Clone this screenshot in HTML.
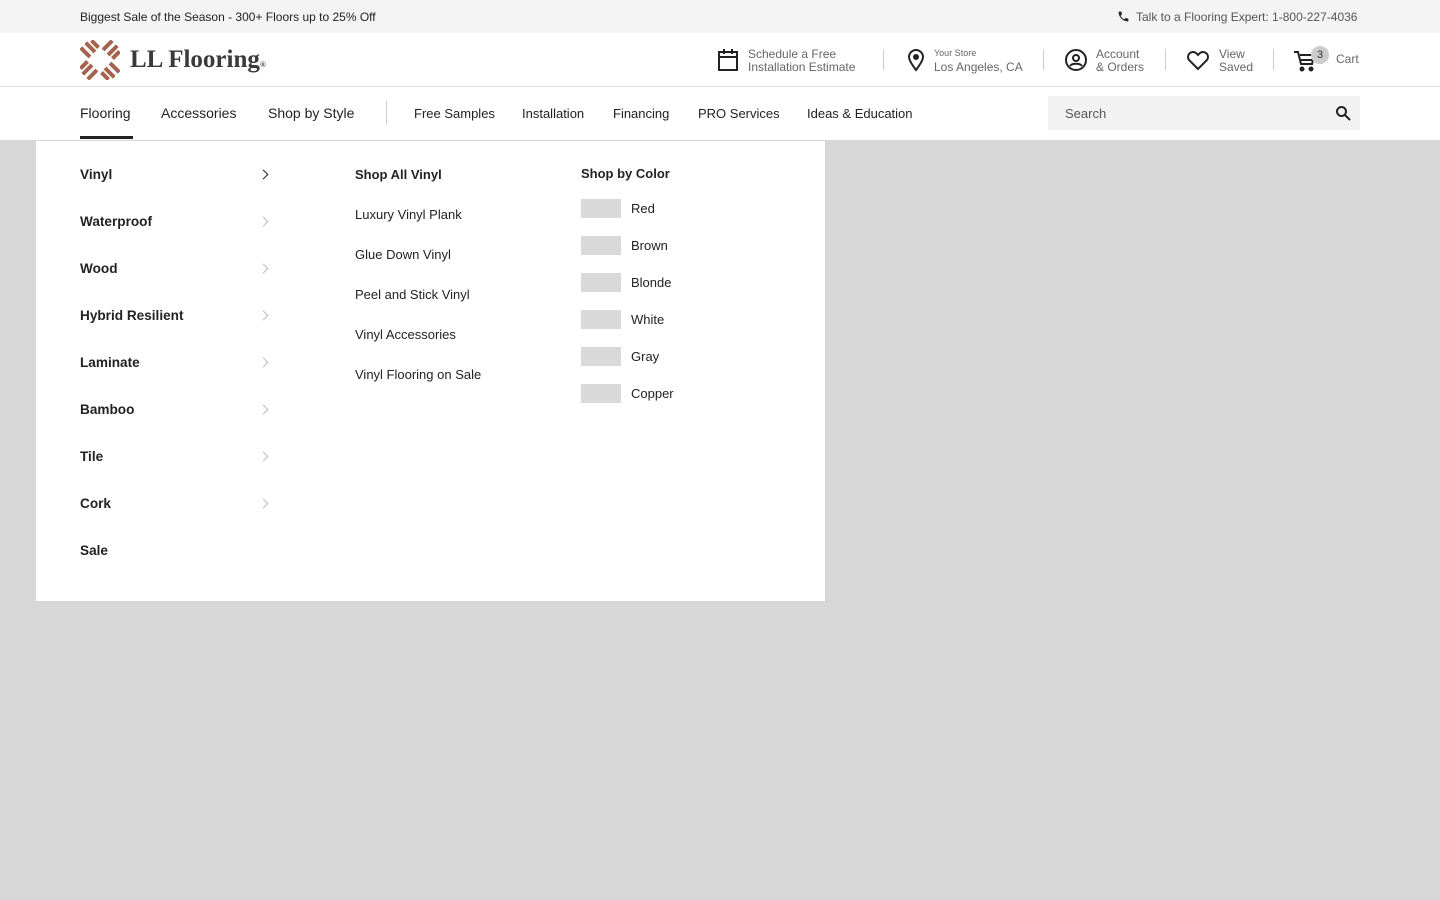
<!DOCTYPE html>
<html><head><style>
*{margin:0;padding:0;box-sizing:border-box}
body{width:1440px;height:900px;background:#d7d7d7;font-family:"Liberation Sans",sans-serif;color:#222;position:relative;overflow:hidden}
.top{position:absolute;left:0;top:0;width:1440px;height:33px;background:#f4f4f4;font-size:12px;color:#222}
.hdr{position:absolute;left:0;top:33px;width:1440px;height:54px;background:#fff;border-bottom:1px solid #e2e2e2}
.nav{position:absolute;left:0;top:87px;width:1440px;height:53px;background:#fff}
.a{position:absolute;white-space:nowrap}
.util{font-size:12px;color:#666;line-height:13px}
.sep{position:absolute;top:49px;width:1px;height:21px;background:#ccc}
.panel{position:absolute;left:36px;top:141px;width:789px;height:460px;background:#fff}
.cat{position:absolute;left:44px;font-size:13.6px;font-weight:bold;color:#222}
.chev{position:absolute;left:224px;width:7px;height:7px;border-right:1.5px solid #bbb;border-top:1.5px solid #bbb;transform:rotate(45deg)}
.sub{position:absolute;left:319px;font-size:13px;color:#222}
.sw{position:absolute;left:545px;width:40px;height:19px;background:#d9d9d9}
.cl{position:absolute;left:595px;font-size:13px;color:#222}
</style></head><body>
<div class="top">
<div class="a" style="left:80px;top:10px">Biggest Sale of the Season - 300+ Floors up to 25% Off</div>
<svg class="a" style="left:1117px;top:10px" width="13" height="13" viewBox="0 0 24 24"><path d="M6.6 10.8c1.4 2.8 3.8 5.1 6.6 6.6l2.2-2.2c.3-.3.7-.4 1-.2 1.1.4 2.300.6 3.6.6.6 0 1 .4 1 1V20c0 .6-.4 1-1 1C10.6 21 3 13.4 3 4c0-.6.4-1 1-1h3.5c.6 0 1 .4 1 1 0 1.3.2 2.5.6 3.6.1.3 0 .7-.2 1z" fill="#222"/></svg>
<div class="a" style="left:1136px;top:10px;color:#555">Talk to a Flooring Expert: 1-800-227-4036</div>
</div>
<div class="hdr"></div>
<svg class="a" style="left:80px;top:40px" width="40" height="40" viewBox="0 0 40 40" fill="#a4634f">
<g id="q"><rect x="3" y="6" width="4" height="13" transform="rotate(-45 5 12)"/><rect x="8" y="1" width="4" height="13" transform="rotate(-45 10 7)"/><rect x="13" y="-1" width="4" height="10" transform="rotate(-45 15 4)"/></g>
<use href="#q" transform="rotate(90 20 20)"/><use href="#q" transform="rotate(180 20 20)"/><use href="#q" transform="rotate(270 20 20)"/>
</svg>
<div class="a" style="left:130px;top:46px;font-family:'Liberation Serif',serif;font-weight:bold;font-size:25px;color:#3a3a3a">LL Flooring<span style="font-size:8px">®</span></div>
<svg class="a" style="left:717px;top:48px" width="22" height="24" viewBox="0 0 22 24" fill="none" stroke="#222" stroke-width="2"><rect x="2" y="4" width="18" height="18"/><path d="M2 9h18M7 1v5M15 1v5"/></svg>
<div class="a util" style="left:748px;top:48px">Schedule a Free<br>Installation Estimate</div>
<div class="sep" style="left:883px"></div>
<svg class="a" style="left:906px;top:48px" width="20" height="24" viewBox="0 0 20 24" fill="none" stroke="#222" stroke-width="2"><path d="M10 22C4 14 3 11 3 9a7 7 0 0114 0c0 2-1 5-7 13z"/><circle cx="10" cy="9" r="2" fill="#222"/></svg>
<div class="a" style="left:934px;top:48px;font-size:9px;color:#666">Your Store</div>
<div class="a" style="left:934px;top:60px;font-size:12px;color:#666">Los Angeles, CA</div>
<div class="sep" style="left:1043px"></div>
<svg class="a" style="left:1064px;top:48px" width="24" height="24" viewBox="0 0 24 24" fill="none" stroke="#222" stroke-width="2"><circle cx="12" cy="12" r="10"/><circle cx="12" cy="10" r="3"/><path d="M6 18c2-3 10-3 12 0"/></svg>
<div class="a util" style="left:1096px;top:48px">Account<br>&amp; Orders</div>
<div class="sep" style="left:1165px"></div>
<svg class="a" style="left:1186px;top:49px" width="24" height="22" viewBox="0 0 24 22" fill="none" stroke="#222" stroke-width="2"><path d="M12 20L3 11a5 5 0 017-7l2 2 2-2a5 5 0 017 7z"/></svg>
<div class="a util" style="left:1219px;top:48px">View<br>Saved</div>
<div class="sep" style="left:1273px"></div>
<svg class="a" style="left:1293px;top:49px" width="24" height="24" viewBox="0 0 24 24" fill="none" stroke="#222" stroke-width="2"><path d="M1 3h4l3 12h11l2-9H7"/><path d="M8 11h12"/><circle cx="9" cy="20" r="1.5" fill="#222"/><circle cx="18" cy="20" r="1.5" fill="#222"/></svg>
<div class="a" style="left:1311px;top:46px;width:18px;height:18px;border-radius:9px;background:#ccc;font-size:11px;text-align:center;line-height:18px;color:#333">3</div>
<div class="a util" style="left:1336px;top:53px">Cart</div>
<div class="nav"></div>
<div class="a" style="left:80px;top:105px;font-size:14px;color:#222">Flooring</div>
<div class="a" style="left:80px;top:136px;width:53px;height:3px;background:#222"></div>
<div class="a" style="left:161px;top:105px;font-size:14px">Accessories</div>
<div class="a" style="left:268px;top:105px;font-size:14px">Shop by Style</div>
<div class="a" style="left:386px;top:101px;width:1px;height:24px;background:#ccc"></div>
<div class="a" style="left:414px;top:106px;font-size:13px">Free Samples</div>
<div class="a" style="left:522px;top:106px;font-size:13px">Installation</div>
<div class="a" style="left:613px;top:106px;font-size:13px">Financing</div>
<div class="a" style="left:698px;top:106px;font-size:13px">PRO Services</div>
<div class="a" style="left:807px;top:106px;font-size:13px">Ideas &amp; Education</div>
<div class="a" style="left:1048px;top:96px;width:312px;height:34px;background:#f2f2f2"></div>
<div class="a" style="left:1065px;top:106px;font-size:13px;color:#555">Search</div>
<svg class="a" style="left:1335px;top:105px" width="16" height="16" viewBox="0 0 16 16" fill="none" stroke="#222" stroke-width="2"><circle cx="6.5" cy="6.5" r="4.5"/><path d="M10 10l5 5"/></svg>
<div class="panel">
<div class="cat" style="top:26px">Vinyl</div><div class="chev" style="top:30px;border-color:#222"></div>
<div class="cat" style="top:73px">Waterproof</div><div class="chev" style="top:77px"></div>
<div class="cat" style="top:120px">Wood</div><div class="chev" style="top:124px"></div>
<div class="cat" style="top:167px">Hybrid Resilient</div><div class="chev" style="top:171px"></div>
<div class="cat" style="top:214px">Laminate</div><div class="chev" style="top:218px"></div>
<div class="cat" style="top:261px">Bamboo</div><div class="chev" style="top:265px"></div>
<div class="cat" style="top:308px">Tile</div><div class="chev" style="top:312px"></div>
<div class="cat" style="top:355px">Cork</div><div class="chev" style="top:359px"></div>
<div class="cat" style="top:402px">Sale</div>
<div class="sub" style="top:26px;font-weight:bold;font-size:13px">Shop All Vinyl</div>
<div class="sub" style="top:66px">Luxury Vinyl Plank</div>
<div class="sub" style="top:106px">Glue Down Vinyl</div>
<div class="sub" style="top:146px">Peel and Stick Vinyl</div>
<div class="sub" style="top:186px">Vinyl Accessories</div>
<div class="sub" style="top:226px">Vinyl Flooring on Sale</div>
<div class="a" style="left:545px;top:25px;font-size:13px;font-weight:bold">Shop by Color</div>
<div class="sw" style="top:58px"></div><div class="cl" style="top:60px">Red</div>
<div class="sw" style="top:95px"></div><div class="cl" style="top:97px">Brown</div>
<div class="sw" style="top:132px"></div><div class="cl" style="top:134px">Blonde</div>
<div class="sw" style="top:169px"></div><div class="cl" style="top:171px">White</div>
<div class="sw" style="top:206px"></div><div class="cl" style="top:208px">Gray</div>
<div class="sw" style="top:243px"></div><div class="cl" style="top:245px">Copper</div>
</div>
</body></html>
